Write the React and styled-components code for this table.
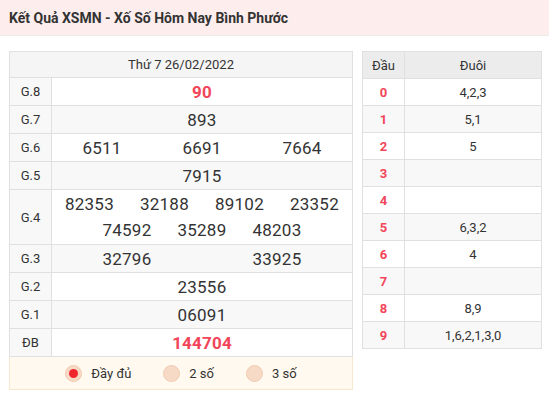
import React from "react";
import styled, { createGlobalStyle } from "styled-components";

const Global = createGlobalStyle`
  html, body { margin: 0; padding: 0; background: #fff; }
  body { font-family: Roboto, "Liberation Sans", Arial, sans-serif; color: #333; }
  * { box-sizing: border-box; }
`;

const Page = styled.div`
  width: 549px;
`;

const TitleBar = styled.div`
  height: 36px;
  background: #fdeded;
  border-bottom: 1px solid #ececec;
  display: flex;
  align-items: center;
  padding-left: 9px;
`;

const Title = styled.h1`
  margin: 0;
  font-size: 14px;
  font-weight: 700;
  color: #333;
`;

const Content = styled.div`
  display: flex;
  gap: 9px;
  padding: 15px 7px 0 9px;
  align-items: flex-start;
`;

const LeftCol = styled.div`
  width: 344px;
`;

const Table = styled.div`
  border: 1px solid #e0e0e0;
  border-bottom: none;
`;

const HeadRow = styled.div`
  height: 26px;
  background: ${(p) => p.$bg || "#f5f5f5"};
  border-bottom: 1px solid #e0e0e0;
  display: flex;
  align-items: center;
  justify-content: center;
  font-size: 13px;
  color: #333;
`;

const Row = styled.div`
  display: flex;
  min-height: ${(p) => p.$h || 28}px;
  border-bottom: 1px solid #e0e0e0;
  background: ${(p) => (p.$alt ? "#f8f8f8" : "#fff")};
`;

const Label = styled.div`
  width: ${(p) => p.$w || 42}px;
  flex: none;
  border-right: 1px solid #e0e0e0;
  background: ${(p) => (p.$plain ? "transparent" : "#f8f8f8")};
  display: flex;
  align-items: center;
  justify-content: center;
  font-size: 13px;
  color: ${(p) => (p.$red ? "#f2455a" : "#333")};
  font-weight: ${(p) => (p.$red ? 700 : 400)};
`;

const Values = styled.div`
  flex: 1;
  display: flex;
  flex-wrap: wrap;
  justify-content: center;
  align-content: center;
  padding: ${(p) => (p.$multi ? "1px 0" : "0")};
`;

const Num = styled.span`
  width: ${(p) => p.$w}%;
  text-align: center;
  font-size: ${(p) => (p.$special ? 17 : 17)}px;
  line-height: 26px;
  font-weight: ${(p) => (p.$special ? 700 : 400)};
  color: ${(p) => (p.$special ? "#f2455a" : "#333")};
  letter-spacing: 0.2px;
`;

const Tail = styled.div`
  flex: 1;
  display: flex;
  align-items: center;
  justify-content: center;
  font-size: 13px;
  color: #333;
`;

const RadioBar = styled.div`
  height: 33px;
  background: #fff9ef;
  border: 1px solid #f6e7cf;
  border-top: none;
  display: flex;
  align-items: center;
  justify-content: center;
  gap: 32px;
`;

const RadioItem = styled.label`
  display: flex;
  align-items: center;
  gap: 9px;
  font-size: 13px;
  color: #333;
`;

const Circle = styled.span`
  width: 17px;
  height: 17px;
  border-radius: 50%;
  background: #f7dac6;
  border: 1px solid #f1cbb2;
  display: flex;
  align-items: center;
  justify-content: center;
  &::after {
    content: "";
    display: ${(p) => (p.$on ? "block" : "none")};
    width: 9px;
    height: 9px;
    border-radius: 50%;
    background: #f0262e;
  }
`;

const RightCol = styled.div`
  width: 180px;
  border: 1px solid #e0e0e0;
  border-bottom: none;
`;

const SideRow = styled.div`
  display: flex;
  height: 27px;
  border-bottom: 1px solid #e0e0e0;
  background: ${(p) => (p.$head ? "#ececec" : p.$alt ? "#f8f8f8" : "#fff")};
`;

const prizes = [
  { label: "G.8", nums: ["90"], special: true },
  { label: "G.7", nums: ["893"] },
  { label: "G.6", nums: ["6511", "6691", "7664"] },
  { label: "G.5", nums: ["7915"] },
  { label: "G.4", nums: ["82353", "32188", "89102", "23352", "74592", "35289", "48203"], w: 25, h: 55 },
  { label: "G.3", nums: ["32796", "33925"] },
  { label: "G.2", nums: ["23556"] },
  { label: "G.1", nums: ["06091"] },
  { label: "ĐB", nums: ["144704"], special: true },
];

const tails = ["4,2,3", "5,1", "5", "", "", "6,3,2", "4", "", "8,9", "1,6,2,1,3,0"];

export default function App() {
  return (
    <Page>
      <Global />
      <TitleBar>
        <Title>Kết Quả XSMN - Xố Số Hôm Nay Bình Phước</Title>
      </TitleBar>
      <Content>
        <LeftCol>
          <Table>
            <HeadRow>Thứ 7 26/02/2022</HeadRow>
            {prizes.map((p, i) => (
              <Row key={p.label} $alt={i % 2 === 1} $h={p.h}>
                <Label>{p.label}</Label>
                <Values>
                  {p.nums.map((n, j) => (
                    <Num key={j} $w={p.w || 100 / p.nums.length} $special={p.special}>
                      {n}
                    </Num>
                  ))}
                </Values>
              </Row>
            ))}
          </Table>
          <RadioBar>
            <RadioItem>
              <Circle $on />
              Đầy đủ
            </RadioItem>
            <RadioItem>
              <Circle />
              2 số
            </RadioItem>
            <RadioItem>
              <Circle />
              3 số
            </RadioItem>
          </RadioBar>
        </LeftCol>
        <RightCol>
          <SideRow $head>
            <Label $plain>Đầu</Label>
            <Tail>Đuôi</Tail>
          </SideRow>
          {tails.map((t, i) => (
            <SideRow key={i} $alt={i % 2 === 1}>
              <Label $plain $red>
                {i}
              </Label>
              <Tail>{t}</Tail>
            </SideRow>
          ))}
        </RightCol>
      </Content>
    </Page>
  );
}
